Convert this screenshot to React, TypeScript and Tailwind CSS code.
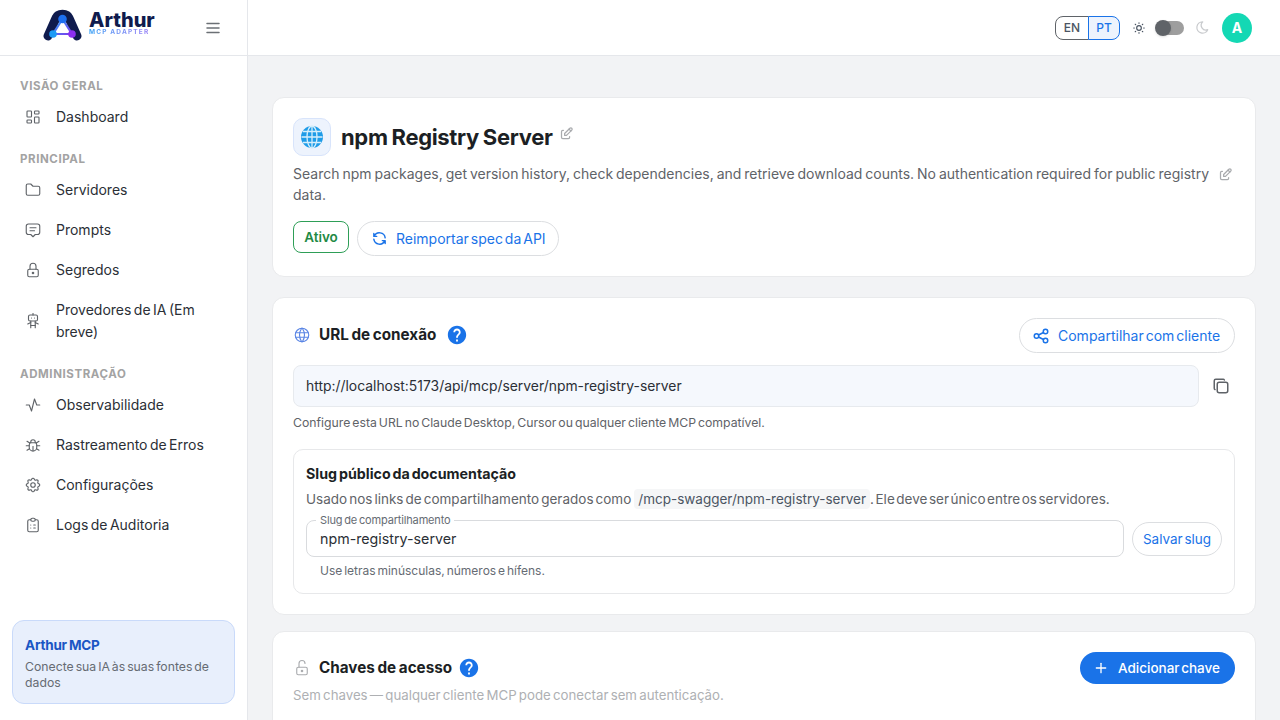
import { ReactNode } from 'react';
import { MdHelp } from 'react-icons/md';
import {
  TbActivity, TbBug, TbClipboardList, TbCopy, TbEdit, TbFolder, TbLayoutDashboard, TbLock, TbLockOpen,
  TbMenu2, TbMessage2, TbMoon, TbPlus, TbRefresh, TbRobot, TbSettings, TbShare, TbSun, TbWorld,
} from 'react-icons/tb';

function Logo() {
  return (
    <svg width="40" height="34" viewBox="0 0 40 34" className="shrink-0">
      <defs>
        <linearGradient id="tri" x1="0" y1="0" x2="1" y2="1">
          <stop offset="0" stopColor="#2aa5f5" />
          <stop offset="1" stopColor="#7c3aed" />
        </linearGradient>
      </defs>
      <path d="M5 28 L13 10 C15 5 24 5 26 10 L34 28" fill="none" stroke="#0f1b4d" strokeWidth="9" strokeLinecap="round" />
      <path d="M19.5 11 L10 26 L29 26 Z" fill="#ffffff" stroke="url(#tri)" strokeWidth="2.2" />
      <circle cx="19.5" cy="11" r="4.3" fill="#1d6ff0" />
      <circle cx="10" cy="26" r="3.8" fill="#1e9bf5" />
      <circle cx="29" cy="26" r="3.8" fill="#8b2ff0" />
    </svg>
  );
}

function EmojiGlobe() {
  return (
    <svg width="24" height="24" viewBox="0 0 24 24">
      <circle cx="12" cy="12" r="11" fill="#1e9ce8" />
      <g fill="none" stroke="#d6eefb" strokeWidth="1.3">
        <ellipse cx="12" cy="12" rx="5" ry="11" />
        <path d="M12 1v22M1.5 12h21M3 6.5h18M3 17.5h18" />
      </g>
    </svg>
  );
}

function NavLabel({ children }: { children: ReactNode }) {
  return <div className="mb-[2px] h-[18px] px-5 text-[11.5px] leading-[18px] font-bold tracking-[0.05em] text-[#a3a3a3]">{children}</div>;
}

function NavItem({ icon, children }: { icon: ReactNode; children: ReactNode }) {
  return (
    <div className="mx-3 flex items-center gap-[14px] px-3 py-[9px] text-[14px] leading-[22px] [word-spacing:-1.5px] text-[#2b2f36]">
      <span className="flex w-[18px] shrink-0 justify-center text-[#5f6368]">{icon}</span>
      <span>{children}</span>
    </div>
  );
}

function Sidebar() {
  return (
    <aside className="flex h-[720px] w-[248px] shrink-0 flex-col border-r border-[#e5e7eb] bg-white">
      <div className="flex h-[56px] shrink-0 items-center border-b border-[#e5e7eb] pr-[25px] pl-[43px]">
        <div className="mb-[6px] flex items-center">
          <Logo />
          <div className="mb-[2px] ml-[6px] flex flex-col">
            <span className="text-[20px] leading-[16px] font-extrabold text-[#0f1b4d]">Arthur</span>
            <span className="mt-[1px] bg-gradient-to-r from-[#2f9ff5] to-[#9b7cf6] bg-clip-text text-[6.5px] leading-[7px] font-bold tracking-[0.18em] text-transparent">MCP ADAPTER</span>
          </div>
        </div>
        <TbMenu2 size={18} className="ml-auto text-[#6b7075]" />
      </div>
      <nav className="pt-[21px]">
        <NavLabel>VISÃO GERAL</NavLabel>
        <NavItem icon={<TbLayoutDashboard size={18} strokeWidth={1.5} />}>Dashboard</NavItem>
        <div className="h-[13px]" />
        <NavLabel>PRINCIPAL</NavLabel>
        <NavItem icon={<TbFolder size={18} strokeWidth={1.5} />}>Servidores</NavItem>
        <NavItem icon={<TbMessage2 size={18} strokeWidth={1.5} />}>Prompts</NavItem>
        <NavItem icon={<TbLock size={18} strokeWidth={1.5} />}>Segredos</NavItem>
        <NavItem icon={<TbRobot size={18} strokeWidth={1.5} />}>Provedores de IA (Em breve)</NavItem>
        <div className="h-[13px]" />
        <NavLabel>ADMINISTRAÇÃO</NavLabel>
        <NavItem icon={<TbActivity size={18} strokeWidth={1.5} />}>Observabilidade</NavItem>
        <NavItem icon={<TbBug size={18} strokeWidth={1.5} />}>Rastreamento de Erros</NavItem>
        <NavItem icon={<TbSettings size={18} strokeWidth={1.5} />}>Configurações</NavItem>
        <NavItem icon={<TbClipboardList size={18} strokeWidth={1.5} />}>Logs de Auditoria</NavItem>
      </nav>
      <div className="mx-3 mt-auto mb-4 h-[84px] rounded-xl border border-[#c9dafa] bg-[#e8effc] px-3 pt-[14px]">
        <div className="text-[13.5px] leading-[20px] font-bold tracking-[-0.015em] [word-spacing:-1px] text-[#1a56c4]">Arthur MCP</div>
        <div className="mt-[4px] text-[12.25px] leading-[16px] [word-spacing:-1.5px] text-[#666b73]">Conecte sua IA às suas fontes de dados</div>
      </div>
    </aside>
  );
}

function TopBar() {
  return (
    <header className="flex h-[56px] shrink-0 items-center justify-end border-b border-[#e5e7eb] bg-white pr-[28px]">
      <div className="flex h-[24px] text-[12px] font-medium">
        <span className="flex w-[34px] items-center justify-center rounded-l-lg border border-[#5f6368] text-[#4b5563]">EN</span>
        <span className="-ml-px flex w-[32px] items-center justify-center rounded-r-lg border border-[#1a73e8] bg-[#edf3fd] text-[#1a73e8]">PT</span>
      </div>
      <TbSun size={14} className="ml-[12px] text-[#4b5563]" />
      <div className="relative ml-[9px] flex h-[14px] w-[30px] items-center">
        <div className="ml-[3px] h-[14px] w-[26px] rounded-full bg-[#9e9e9e]" />
        <div className="absolute top-[-1px] left-0 h-[16px] w-[16px] rounded-full bg-[#5f6368] shadow" />
      </div>
      <TbMoon size={15} className="ml-[10px] text-[#c9cbce]" />
      <div className="ml-[12px] flex h-[30px] w-[30px] items-center justify-center rounded-full bg-[#14d8b4] text-[14px] font-bold text-white">A</div>
    </header>
  );
}

function Card({ className, children }: { className: string; children: ReactNode }) {
  return <section className={`rounded-xl border border-[#e9eaec] bg-white px-5 ${className}`}>{children}</section>;
}

function SectionTitle({ icon, children, className, gap }: { icon: ReactNode; children: ReactNode; className?: string; gap: string }) {
  return (
    <div className={`flex items-center ${className ?? ''}`}>
      <span className="flex w-[18px] justify-center">{icon}</span>
      <h2 className="ml-[8px] text-[15.25px] leading-[24px] font-bold [word-spacing:-1px] text-[#1c1f24]">{children}</h2>
      <MdHelp size={22} className={`${gap} text-[#1a73e8]`} />
    </div>
  );
}

export default function App() {
  return (
    <div className="flex h-[720px] w-[1280px] overflow-hidden bg-[#f2f3f5] font-['Inter','Liberation_Sans',sans-serif]">
      <Sidebar />
      <div className="flex min-w-0 flex-1 flex-col">
        <TopBar />
        <main className="flex flex-col gap-5 px-6 pt-[41px]">
          {/* cabeçalho do servidor */}
          <Card className="h-[180px] pt-5">
            <div className="flex items-center">
              <div className="flex h-[38px] w-[38px] items-center justify-center rounded-[10px] border border-[#d8e4fb] bg-[#edf3fd]">
                <EmojiGlobe />
              </div>
              <h1 className="ml-[10px] text-[22px] leading-[38px] font-bold tracking-[-0.015em] [word-spacing:-1px] text-[#1c1f24]">npm Registry Server</h1>
              <TbEdit size={15} className="mb-2 ml-[6px] text-[#a9abae]" />
            </div>
            <div className="mt-[7px] flex items-start">
              <p className="w-[919px] text-[14px] leading-[21px] [word-spacing:-1px] text-[#5f6368]">
                Search npm packages, get version history, check dependencies, and retrieve download counts. No authentication required for public registry data.
              </p>
              <TbEdit size={15} className="mt-[4px] ml-[6px] text-[#a9abae]" />
            </div>
            <div className="mt-[16px] flex items-start gap-2">
              <span className="flex h-[32px] w-[56px] items-center justify-center rounded-lg border border-[#2e9e57] text-[13.5px] font-semibold text-[#1f8a45]">Ativo</span>
              <button className="flex h-[35px] w-[202px] items-center rounded-full border border-[#dcdee1] pl-[13px] text-[14px] [word-spacing:-2px] text-[#1a73e8]">
                <TbRefresh size={17} />
                <span className="ml-[8px]">Reimportar spec da API</span>
              </button>
            </div>
          </Card>

          {/* url de conexão */}
          <Card className="h-[318px] pt-5">
            <div className="flex h-[35px] items-center justify-between">
              <SectionTitle gap="ml-[10px]" className="mb-[2px]" icon={<TbWorld size={18} strokeWidth={1.5} className="text-[#5b86e5]" />}>URL de conexão</SectionTitle>
              <button className="flex h-[35px] w-[216px] items-center rounded-full border border-[#dcdee1] pl-[12px] text-[14px] [word-spacing:-2px] text-[#1a73e8]">
                <TbShare size={18} />
                <span className="ml-[8px]">Compartilhar com cliente</span>
              </button>
            </div>
            <div className="mt-3 flex items-center">
              <div className="flex h-[42px] w-[906px] items-center rounded-lg border border-[#e7eaee] bg-[#f5f8fd] px-3 text-[13.9px] text-[#2b2f36]">
                http://localhost:5173/api/mcp/server/npm-registry-server
              </div>
              <TbCopy size={18} className="ml-[13px] text-[#5f6368]" />
            </div>
            <p className="mt-[7px] text-[12.25px] leading-[18px] [word-spacing:-1.5px] text-[#5f6368]">Configure esta URL no Claude Desktop, Cursor ou qualquer cliente MCP compatível.</p>

            <div className="mt-[17px] h-[145px] rounded-[10px] border border-[#e7e8ea] px-3 pt-[14px]">
              <h3 className="text-[14.25px] leading-[20px] font-bold [word-spacing:-1.5px] text-[#1c1f24]">Slug público da documentação</h3>
              <p className="mt-[5px] flex h-[20px] items-center text-[13.5px] [word-spacing:-1.75px] text-[#5f6368]">
                <span>Usado nos links de compartilhamento gerados como</span>
                <code className="ml-[3px] rounded bg-[#f5f6f7] px-[4px] font-['Inter','Liberation_Sans',sans-serif] text-[13.5px] text-[#4b5563]">/mcp-swagger/npm-registry-server</code>
                <span className="[word-spacing:-2.25px]">. Ele deve ser único entre os servidores.</span>
              </p>
              <div className="mt-[5px] flex items-end gap-2">
                <fieldset className="h-[43px] w-[818px] rounded-lg border border-[#d9dbde] px-[9px]">
                  <legend className="px-1 text-[11px] leading-[12px] tracking-[-0.015em] [word-spacing:-1px] text-[#666b73]">Slug de compartilhamento</legend>
                  <div className="px-[4px] pt-[1px] text-[14.25px] leading-[24px] text-[#2b2f36]">npm-registry-server</div>
                </fieldset>
                <button className="mb-[1px] h-[34px] w-[90px] rounded-full border border-[#dcdee1] text-[13.5px] [word-spacing:-2px] text-[#1a73e8]">Salvar slug</button>
              </div>
              <p className="mt-[5px] pl-[14px] text-[12px] leading-[18px] [word-spacing:-1.5px] text-[#666b73]">Use letras minúsculas, números e hífens.</p>
            </div>
          </Card>

          {/* chaves de acesso */}
          <Card className="-mt-1 h-[200px] pt-5">
            <div className="flex h-[32px] items-center justify-between">
              <SectionTitle gap="ml-[6px]" icon={<TbLockOpen size={20} strokeWidth={1.5} className="text-[#a9abae]" />}>Chaves de acesso</SectionTitle>
              <button className="flex h-[32px] w-[155px] items-center rounded-full bg-[#1a73e8] pl-[13px] text-[13.5px] font-medium [word-spacing:-2px] text-white">
                <TbPlus size={16} />
                <span className="ml-[9px]">Adicionar chave</span>
              </button>
            </div>
            <p className="mt-[1px] text-[13.25px] leading-[20px] [word-spacing:-1.5px] text-[#aeb0b3]">Sem chaves — qualquer cliente MCP pode conectar sem autenticação.</p>
          </Card>
        </main>
      </div>
    </div>
  );
}
